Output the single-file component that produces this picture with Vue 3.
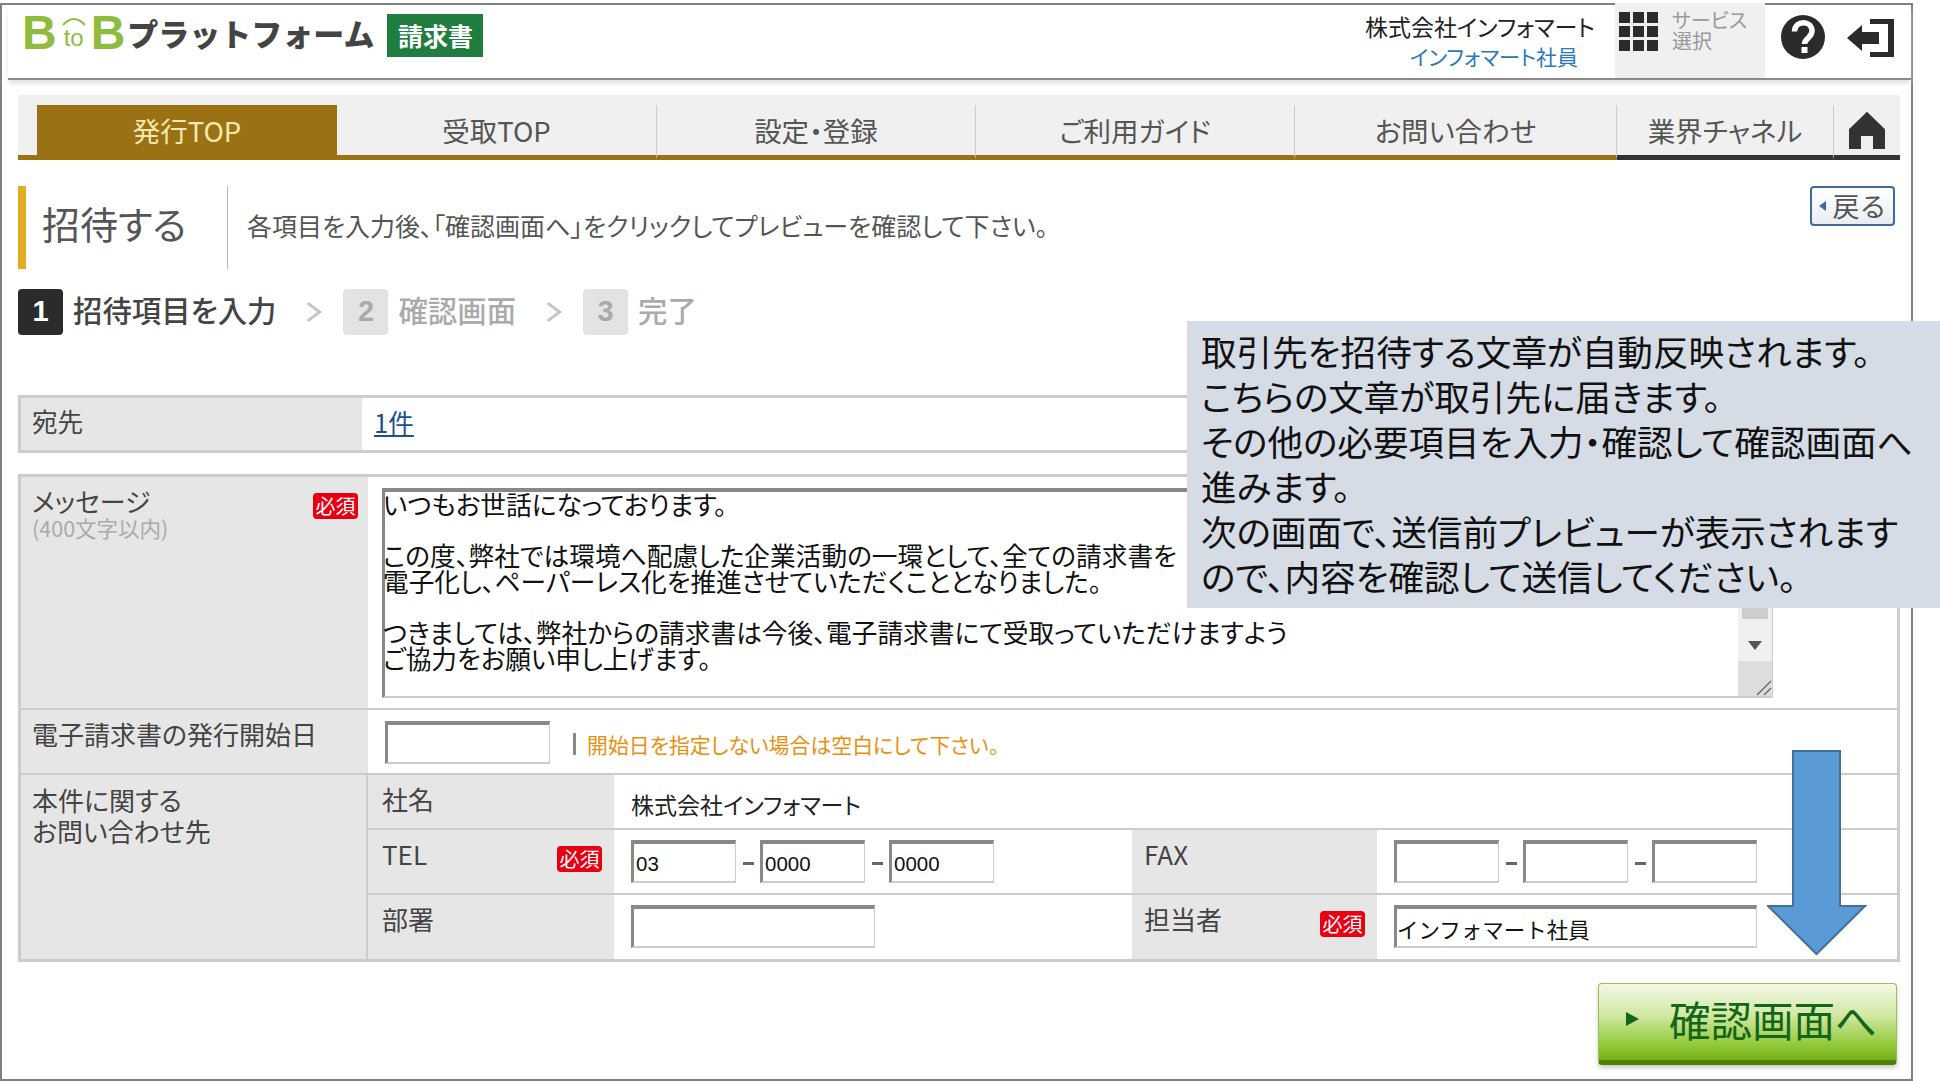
<script setup>
const tabs = ["受取TOP", "設定・登録", "ご利用ガイド", "お問い合わせ"];

const message = `いつもお世話になっております。

この度、弊社では環境へ配慮した企業活動の一環として、全ての請求書を
電子化し、ペーパーレス化を推進させていただくこととなりました。

つきましては、弊社からの請求書は今後、電子請求書にて受取っていただけますよう
ご協力をお願い申し上げます。`;

const notice = [
  "取引先を招待する文章が自動反映されます。",
  "こちらの文章が取引先に届きます。",
  "その他の必要項目を入力・確認して確認画面へ",
  "進みます。",
  "次の画面で、送信前プレビューが表示されます",
  "ので、内容を確認して送信してください。",
];
</script>

<template>
  <div class="page">
    <div class="frame">
      <header class="header">
        <div class="logo">
          <span class="logo-b">B</span>
          <span class="logo-to">
            <svg width="24" height="10" viewBox="0 0 24 10">
              <path d="M1 9 Q12 -3 23 9" fill="none" stroke="#8fbb3f" stroke-width="2" />
            </svg>
            <span>to</span>
          </span>
          <span class="logo-b">B</span>
          <span class="logo-name">プラットフォーム</span>
          <span class="logo-tag">請求書</span>
        </div>
        <div class="user">
          <div class="company">株式会社インフォマート</div>
          <div class="person">インフォマート社員</div>
        </div>
        <div class="service">
          <div class="grid-icon">
            <i v-for="n in 9" :key="n"></i>
          </div>
          <div class="service-text">サービス<br />選択</div>
        </div>
        <svg class="help" width="46" height="46" viewBox="0 0 46 46">
          <circle cx="23" cy="23" r="22" fill="#2b2b2b" />
          <path d="M14.5 17.5 C15 5.5 32 6 32 17 C32 24 24.5 24 24.5 30" fill="none" stroke="#fff" stroke-width="5.5" />
          <rect x="21.5" y="33" width="6" height="6" fill="#fff" />
        </svg>
        <svg class="exit" width="48" height="40" viewBox="0 0 48 40">
          <path d="M0 20 L15 7 V14 H32 V26 H15 V33 Z" fill="#2b2b2b" />
          <path d="M23 1 H47 V39 H23 V34 H41 V6 H23 Z" fill="#2b2b2b" />
        </svg>
      </header>

      <nav class="nav">
        <div class="nav-gap"></div>
        <div class="tab active">発行TOP</div>
        <div v-for="tab in tabs" :key="tab" class="tab">{{ tab }}</div>
        <div class="tab dark">業界チャネル</div>
        <div class="tab dark home">
          <svg width="36" height="38" viewBox="0 0 36 44" preserveAspectRatio="none">
            <path d="M18 1 L36 21 V44 H24 V29 H12 V44 H0 V21 Z" fill="#333" />
          </svg>
        </div>
      </nav>

      <div class="title-row">
        <h1 class="title">招待する</h1>
        <p class="lead">各項目を入力後、「確認画面へ」をクリックしてプレビューを確認して下さい。</p>
        <button class="back"><span class="back-arrow"></span>戻る</button>
      </div>

      <div class="steps">
        <span class="num current">1</span>
        <span class="step-label current">招待項目を入力</span>
        <span class="chev"></span>
        <span class="num">2</span>
        <span class="step-label">確認画面</span>
        <span class="chev"></span>
        <span class="num">3</span>
        <span class="step-label">完了</span>
      </div>

      <section class="table to-table">
        <div class="to-label">宛先</div>
        <div class="to-value"><a class="link">1件</a></div>
      </section>

      <section class="table form-table">
        <div class="row message-row">
          <div class="label main-col">
            <div class="label-top">
              <span>メッセージ</span>
              <span class="badge">必須</span>
            </div>
            <div class="sub">(400文字以内)</div>
          </div>
          <div class="value message-value">
            <div class="textarea">
              <div class="textarea-text">{{ message }}</div>
              <div class="scrollbar">
                <div class="scroll-thumb"></div>
                <div class="scroll-down"></div>
                <div class="resize">
                  <svg width="16" height="16" viewBox="0 0 16 16">
                    <path d="M1 15 L15 1 M8 15 L15 8" stroke="#666" stroke-width="1.4" />
                  </svg>
                </div>
              </div>
            </div>
          </div>
        </div>

        <div class="row date-row">
          <div class="label main-col">電子請求書の発行開始日</div>
          <div class="value date-value">
            <input class="input date-input" readonly />
            <span class="note">開始日を指定しない場合は空白にして下さい。</span>
          </div>
        </div>

        <div class="row contact-row">
          <div class="label main-col contact-col">本件に関する<br />お問い合わせ先</div>
          <div class="contact">
            <div class="sub-row name-row">
              <div class="label sub-label">社名</div>
              <div class="value company-value">株式会社インフォマート</div>
            </div>
            <div class="sub-row phone-row">
              <div class="label sub-label">TEL<span class="badge">必須</span></div>
              <div class="value field">
                <input class="input phone" value="03" readonly />
                <span class="dash"></span>
                <input class="input phone" value="0000" readonly />
                <span class="dash"></span>
                <input class="input phone" value="0000" readonly />
              </div>
              <div class="label sub-label side">FAX</div>
              <div class="value field side-field">
                <input class="input phone" readonly />
                <span class="dash"></span>
                <input class="input phone" readonly />
                <span class="dash"></span>
                <input class="input phone" readonly />
              </div>
            </div>
            <div class="sub-row staff-row">
              <div class="label sub-label">部署</div>
              <div class="value field">
                <input class="input dept" readonly />
              </div>
              <div class="label sub-label side">担当者<span class="badge">必須</span></div>
              <div class="value field side-field">
                <input class="input staff" value="インフォマート社員" readonly />
              </div>
            </div>
          </div>
        </div>
      </section>

      <div class="actions">
        <button class="confirm"><span class="confirm-arrow"></span>確認画面へ</button>
      </div>
    </div>

    <aside class="callout">
      <div v-for="line in notice" :key="line">{{ line }}</div>
    </aside>

    <svg class="down-arrow" width="100" height="206" viewBox="0 0 100 206">
      <path d="M26 1 H73 V156 H98 L49.5 204 L1 156 H26 Z" fill="#5b9bd5" stroke="#41719c" stroke-width="2" />
    </svg>
  </div>
</template>

<style scoped>
.page {
  position: relative;
  width: 1940px;
  height: 1081px;
  overflow: hidden;
  background: #fff;
  font-family: "Noto Sans CJK JP", "Liberation Sans", sans-serif;
  font-feature-settings: "palt";
  color: #444;
}

.frame {
  box-sizing: border-box;
  width: 1913px;
  height: 1078px;
  margin-top: 3px;
  border: 2px solid #808080;
}

/* header */
.header {
  display: flex;
  align-items: center;
  height: 73px;
  margin-left: 6px;
  padding-right: 16px;
  border-bottom: 2px solid #8a8a8a;
  box-shadow: 0 4px 5px -1px #ddd;
}

.logo {
  display: flex;
  align-items: center;
  padding-left: 14px;
  margin-top: -17px;
}

.logo-b {
  font-family: "Liberation Sans", sans-serif;
  font-weight: 700;
  font-size: 48px;
  line-height: 50px;
  color: #8fbb3f;
}

.logo-to {
  display: flex;
  flex-direction: column;
  align-items: center;
  width: 34px;
  font-family: "Liberation Sans", sans-serif;
  font-size: 24px;
  line-height: 24px;
  color: #8fbb3f;
}

.logo-name {
  margin-left: 2px;
  font-size: 31px;
  font-weight: 900;
  font-feature-settings: normal;
  line-height: 50px;
  color: #444;
}

.logo-tag {
  width: 96px;
  height: 43px;
  margin-left: 13px;
  margin-top: 4px;
  background: #1f7d3f;
  color: #fff;
  font-size: 25px;
  font-weight: 700;
  line-height: 43px;
  text-align: center;
}

.user {
  margin-left: auto;
  margin-top: -1px;
  text-align: right;
}

.company {
  font-size: 23px;
  line-height: 30px;
  color: #222;
}

.person {
  margin-right: 17px;
  font-size: 21px;
  line-height: 30px;
  color: #2a7ab8;
}

.service {
  display: flex;
  gap: 14px;
  box-sizing: border-box;
  width: 150px;
  height: 75px;
  margin-left: 20px;
  margin-top: -2px;
  padding: 9px 0 0 4px;
  background: #f0f0f0;
}

.grid-icon {
  display: grid;
  grid-template-columns: repeat(3, 11px);
  grid-template-rows: repeat(3, 11px);
  gap: 3px;
  width: 39px;
}

.grid-icon i {
  background: #2b2b2b;
}

.service-text {
  margin-top: -3px;
  font-size: 20px;
  line-height: 21px;
  color: #999;
}

.help {
  margin-left: 15px;
  margin-top: -9px;
}

.exit {
  margin-left: 21px;
  margin-top: -8px;
}

/* nav */
.nav {
  display: grid;
  grid-template-columns: 19px 300px 320px 319px 319px 322px 217px 66px;
  width: 1882px;
  height: 65px;
  margin: 15px 0 0 16px;
  background: #f0f0f0;
}

.nav-gap {
  border-bottom: 5px solid #9a7213;
}

.tab {
  box-sizing: border-box;
  position: relative;
  display: flex;
  align-items: center;
  justify-content: center;
  margin-top: 10px;
  border-bottom: 5px solid #9a7213;
  border-right: 1px solid #ccc;
  font-size: 27.5px;
  color: #555;
}

.tab.active {
  background: #9a7213;
  color: #f6e7b0;
  border-right: 0;
}

.tab.dark {
  border-bottom-color: #333;
}

.home {
  border-right: 0;
}

/* title */
.title-row {
  display: flex;
  width: 1877px;
  height: 83px;
  margin: 26px 0 0 16px;
}

.title {
  box-sizing: border-box;
  width: 210px;
  height: 83px;
  margin: 0;
  padding-left: 16px;
  border-left: 8px solid #e3ac25;
  border-right: 1px solid #bbb;
  font-size: 38px;
  font-weight: 400;
  line-height: 74px;
  color: #555;
}

.lead {
  margin: 0;
  padding-left: 19px;
  font-size: 25px;
  line-height: 78px;
  color: #555;
}

.back {
  display: flex;
  align-items: center;
  justify-content: center;
  gap: 7px;
  box-sizing: border-box;
  width: 85px;
  height: 40px;
  margin-left: auto;
  padding: 0;
  border: 2px solid #3e6a9e;
  border-radius: 4px;
  background: linear-gradient(#fff, #e9eef3);
  font-family: inherit;
  font-size: 27px;
  line-height: 30px;
  color: #555;
}

.back-arrow {
  border-top: 5px solid transparent;
  border-bottom: 5px solid transparent;
  border-right: 7px solid #3e6a9e;
}

/* steps */
.steps {
  display: flex;
  align-items: center;
  height: 46px;
  margin: 20px 0 0 16px;
}

.num {
  width: 45px;
  height: 46px;
  border-radius: 4px;
  background: #e3e3e3;
  color: #aaa;
  font-family: "Liberation Sans", sans-serif;
  font-size: 29px;
  font-weight: 700;
  line-height: 44px;
  text-align: center;
}

.num.current {
  background: #2b2b2b;
  color: #fff;
}

.step-label {
  margin-left: 10px;
  margin-top: -6px;
  font-size: 29.4px;
  font-weight: 500;
  line-height: 46px;
  color: #aaa;
}

.step-label.current {
  color: #444;
}

.chev {
  width: 13px;
  height: 13px;
  margin: 0 26px 0 25px;
  border-top: 3px solid #c4c4c4;
  border-right: 3px solid #c4c4c4;
  transform: rotate(45deg) skew(-8deg, -8deg);
}

/* tables */
.table {
  box-sizing: border-box;
  width: 1882px;
  margin-left: 16px;
  border: 3px solid #ccc;
}

.label,
.value {
  font-size: 26px;
  line-height: 30px;
}

.to-table {
  display: flex;
  height: 58px;
  margin-top: 60px;
}

.to-label {
  box-sizing: border-box;
  width: 341px;
  padding-left: 11px;
  background: #e6e6e6;
  font-size: 25.6px;
  line-height: 46px;
}

.to-value {
  padding-left: 12px;
  font-size: 25.6px;
  line-height: 48px;
}

.link {
  color: #1f4e8c;
  text-decoration: underline;
}

.form-table {
  height: 488px;
  margin-top: 21px;
}

.row {
  display: flex;
  box-sizing: border-box;
}

.main-col {
  flex: none;
  box-sizing: border-box;
  width: 347px;
  padding: 9px 10px 0 11px;
  background: #e6e6e6;
}

.message-row {
  height: 233px;
  border-bottom: 2px solid #ccc;
}

.label-top {
  display: flex;
  justify-content: space-between;
  align-items: flex-start;
}

.label-top .badge {
  margin-top: 7px;
}

.sub {
  margin-top: -3px;
  font-size: 21.5px;
  line-height: 24px;
  color: #aaa;
}

.badge {
  width: 45px;
  height: 26px;
  border-radius: 4px;
  background: #e60012;
  color: #fff;
  font-size: 20px;
  line-height: 26px;
  text-align: center;
}

.message-value {
  padding: 11px 0 0 14px;
}

.textarea {
  display: flex;
  box-sizing: border-box;
  width: 1391px;
  height: 210px;
  border-top: 4px solid #888;
  border-left: 3px solid #888;
  border-right: 1px solid #ccc;
  border-bottom: 2px solid #ccc;
}

.textarea-text {
  flex: 1;
  margin: -1px 0 0 -2px;
  font-size: 25.7px;
  line-height: 25.6px;
  color: #111;
  white-space: pre;
}

.scrollbar {
  display: flex;
  flex-direction: column;
  align-items: center;
  width: 34px;
  background: #f0f0f0;
}

.scroll-thumb {
  width: 26px;
  height: 127px;
  background: #cdcdcd;
}

.scroll-down {
  width: 0;
  height: 0;
  margin-top: 22px;
  border-left: 7px solid transparent;
  border-right: 7px solid transparent;
  border-top: 9px solid #555;
}

.resize {
  display: flex;
  align-items: flex-end;
  justify-content: flex-end;
  width: 100%;
  height: 35px;
  margin-top: auto;
  background: #ddd;
}

.date-row {
  height: 65px;
  border-bottom: 2px solid #ccc;
}

.date-value {
  display: flex;
  align-items: center;
  padding-left: 17px;
  padding-top: 2px;
}

.input {
  box-sizing: border-box;
  height: 43px;
  padding: 3px 2px 0;
  border-top: 4px solid #888;
  border-left: 3px solid #888;
  border-right: 1px solid #ccc;
  border-bottom: 2px solid #ccc;
  border-radius: 0;
  outline: none;
  background: #fff;
  font-family: "Liberation Sans", "Noto Sans CJK JP", sans-serif;
  font-size: 20.5px;
  color: #111;
}

.date-input {
  width: 165px;
}

.note {
  margin-left: 23px;
  padding-left: 11px;
  margin-top: 2px;
  border-left: 3px solid #888;
  font-size: 20.9px;
  line-height: 22px;
  color: #e8900c;
}

.contact-row {
  height: 184px;
}

.contact-col {
  padding-top: 9px;
  border-right: 2px solid #ccc;
  line-height: 31px;
}

.contact {
  flex: 1;
}

.sub-row {
  display: flex;
  box-sizing: border-box;
  border-bottom: 2px solid #ccc;
}

.name-row {
  height: 55px;
}

.phone-row {
  height: 65px;
}

.staff-row {
  height: 64px;
  border-bottom: 0;
}

.sub-label {
  display: flex;
  justify-content: space-between;
  align-items: flex-start;
  flex: none;
  box-sizing: border-box;
  width: 246px;
  padding: 9px 12px 0 14px;
  background: #e6e6e6;
}

.sub-label .badge {
  margin: 7px 0 0;
}

.side {
  width: 245px;
  padding-left: 12px;
  padding-right: 12px;
}

.company-value {
  padding: 14px 0 0 17px;
  font-size: 23px;
  color: #222;
}

.field {
  display: flex;
  align-items: flex-start;
  flex: none;
  box-sizing: border-box;
  width: 518px;
  padding: 10px 0 0 17px;
}

.side-field {
  width: auto;
}

.phone {
  width: 105px;
}

.dash {
  width: 11px;
  height: 3px;
  margin: 22px 6px 0 7px;
  background: #666;
}

.dept {
  width: 244px;
}

.staff {
  width: 363px;
  padding: 1px 0 0;
  font-family: "Noto Sans CJK JP", sans-serif;
  font-size: 21.5px;
  line-height: 30px;
}

.actions {
  display: flex;
  justify-content: flex-end;
  width: 1895px;
  margin-top: 21px;
}

.confirm {
  display: flex;
  align-items: center;
  box-sizing: border-box;
  width: 299px;
  height: 82px;
  padding: 0 0 6px 27px;
  border: 1px solid #9cbd5a;
  border-bottom: 5px solid #4d8000;
  border-radius: 4px;
  background: linear-gradient(#f4f9e8, #d2e9a4 40%, #92c93a 80%, #76b015);
  box-shadow: 0 3px 4px #ccc;
  font-family: inherit;
  font-feature-settings: normal;
  font-size: 41.5px;
  line-height: 60px;
  color: #14661a;
}

.confirm-arrow {
  margin-right: 30px;
  border-top: 7px solid transparent;
  border-bottom: 7px solid transparent;
  border-left: 13px solid #14661a;
}

/* overlays */
.callout {
  position: absolute;
  left: 1187px;
  top: 321px;
  box-sizing: border-box;
  width: 753px;
  height: 287px;
  padding: 7px 0 0 14px;
  background: #d6dce5;
  font-size: 35.6px;
  line-height: 45px;
  color: #111;
  white-space: nowrap;
}

.down-arrow {
  position: absolute;
  left: 1767px;
  top: 750px;
}
</style>

<style>
body {
  margin: 0;
  background: #fff;
}
</style>
